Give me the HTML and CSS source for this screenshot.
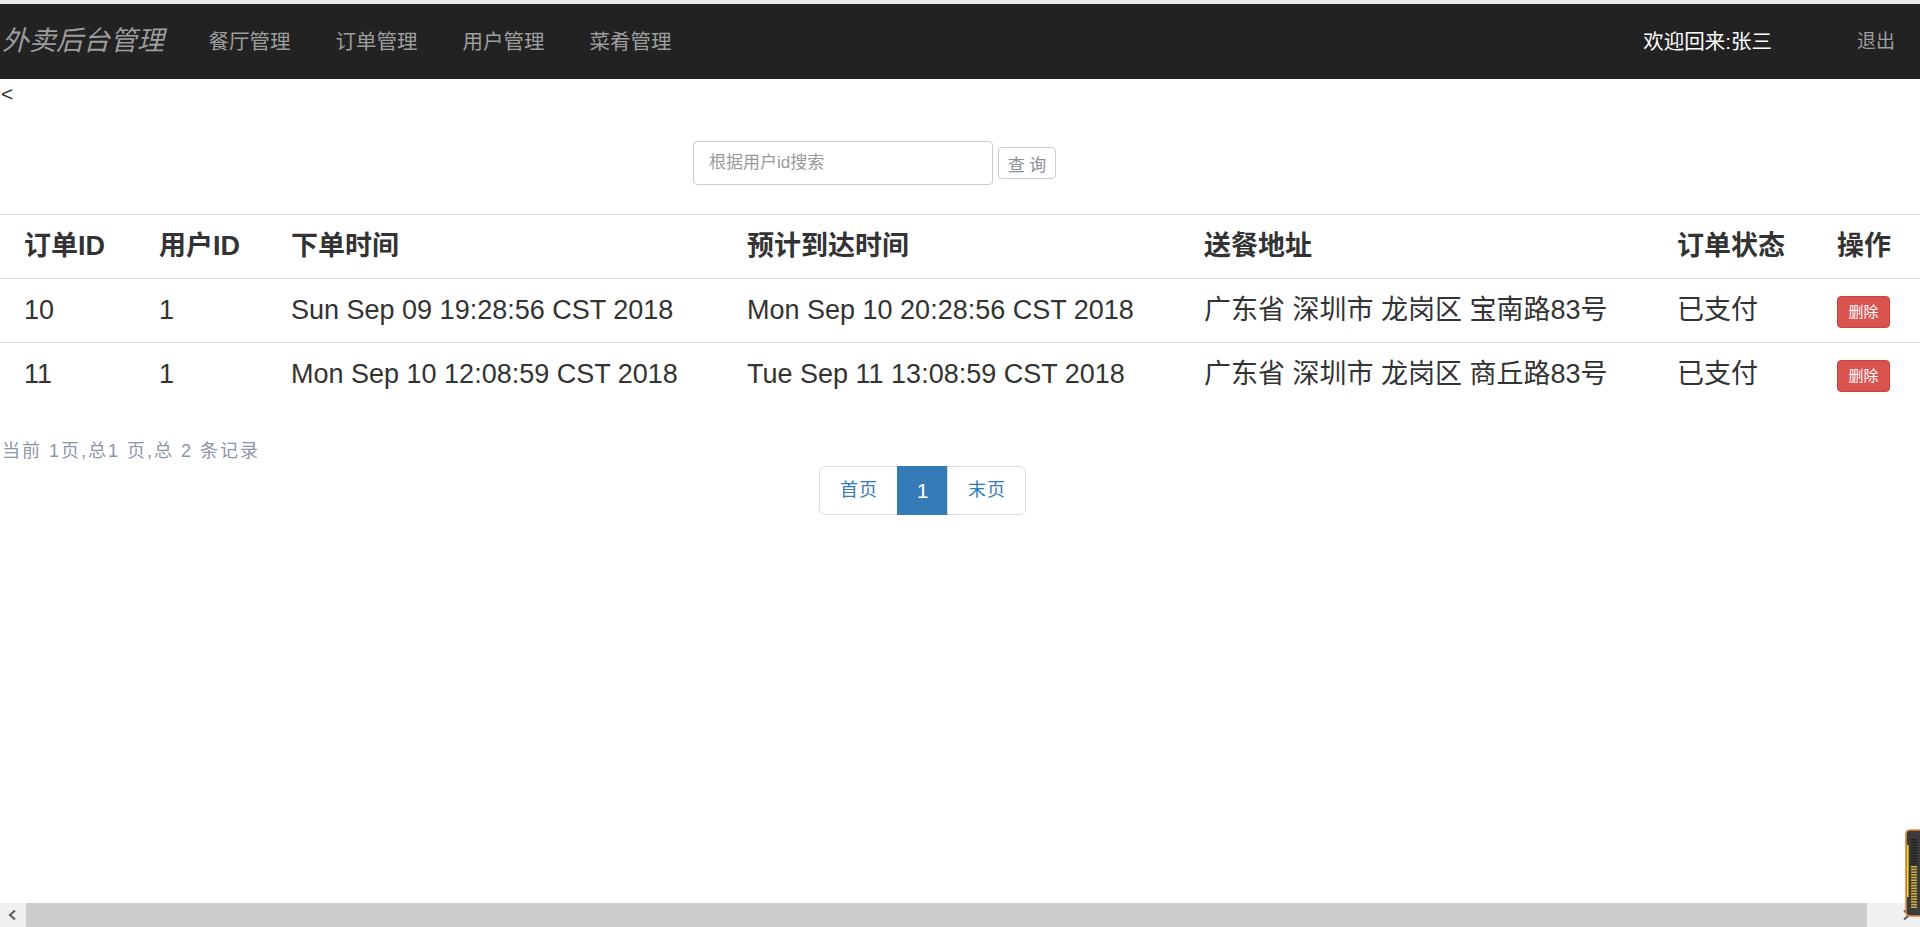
FILE: index.html
```html
<!DOCTYPE html>
<html lang="zh-CN">
<head>
<meta charset="utf-8">
<title>外卖后台管理</title>
<link rel="stylesheet" href="styles.css">
</head>
<body>
<div class="topstrip"></div>
<nav class="navbar">
  <a class="brand" href="#">外卖后台管理</a>
  <ul class="nav">
    <li><a href="#">餐厅管理</a></li>
    <li><a href="#">订单管理</a></li>
    <li><a href="#">用户管理</a></li>
    <li><a href="#">菜肴管理</a></li>
  </ul>
  <span class="welcome">欢迎回来:张三</span>
  <a class="logout" href="#">退出</a>
</nav>
<div class="back">&lt;</div>
<form class="search">
  <input class="search-input" type="text" placeholder="根据用户id搜索">
  <button class="search-btn" type="button">查 询</button>
</form>
<table class="orders">
  <colgroup>
    <col class="c1"><col class="c2"><col class="c3"><col class="c4"><col class="c5"><col class="c6"><col class="c7">
  </colgroup>
  <thead>
    <tr><th>订单ID</th><th>用户ID</th><th>下单时间</th><th>预计到达时间</th><th>送餐地址</th><th>订单状态</th><th>操作</th></tr>
  </thead>
  <tbody>
    <tr><td>10</td><td>1</td><td>Sun Sep 09 19:28:56 CST 2018</td><td>Mon Sep 10 20:28:56 CST 2018</td><td>广东省 深圳市 龙岗区 宝南路83号</td><td>已支付</td><td><button class="del" type="button">删除</button></td></tr>
    <tr><td>11</td><td>1</td><td>Mon Sep 10 12:08:59 CST 2018</td><td>Tue Sep 11 13:08:59 CST 2018</td><td>广东省 深圳市 龙岗区 商丘路83号</td><td>已支付</td><td><button class="del" type="button">删除</button></td></tr>
  </tbody>
</table>
<div class="pageinfo">当前 1页,总1 页,总 2 条记录</div>
<ul class="pagination">
  <li><a href="#">首页</a></li>
  <li class="active"><a href="#">1</a></li>
  <li><a href="#">末页</a></li>
</ul>

<div class="hscroll">
  <div class="hs-btn hs-left">
    <svg width="12" height="12" viewBox="0 0 12 12"><path d="M8 1.5 L3 6 L8 10.5" fill="none" stroke="#606060" stroke-width="2.2"/></svg>
  </div>
  <div class="hs-thumb"></div>
  <div class="hs-btn hs-right">
    <svg width="12" height="12" viewBox="0 0 12 12"><path d="M4 1.5 L9 6 L4 10.5" fill="none" stroke="#606060" stroke-width="2.2"/></svg>
  </div>
</div>
<div class="meter">
  <svg width="15" height="88" viewBox="0 0 15 88">
    <rect x="1" y="1" width="20" height="86" rx="4" fill="#3b3b3b" stroke="#e2893c" stroke-width="1.6"/>
    <rect x="2" y="16" width="1.6" height="52" fill="#f2dc1a"/>
    <g fill="#1e1e1e">
      <rect x="6" y="10" width="6" height="1.3"/><rect x="6" y="12.7" width="6" height="1.3"/><rect x="6" y="15.4" width="6" height="1.3"/><rect x="6" y="18.1" width="6" height="1.3"/><rect x="6" y="20.8" width="6" height="1.3"/><rect x="6" y="23.5" width="6" height="1.3"/><rect x="6" y="26.2" width="6" height="1.3"/><rect x="6" y="28.9" width="6" height="1.3"/><rect x="6" y="31.6" width="6" height="1.3"/><rect x="6" y="34.3" width="6" height="1.3"/>
    </g>
    <g fill="#d8b33a">
      <rect x="6" y="37" width="6" height="1.5"/><rect x="6" y="39.7" width="6" height="1.5"/><rect x="6" y="42.4" width="6" height="1.5"/><rect x="6" y="45.1" width="6" height="1.5"/><rect x="6" y="47.8" width="6" height="1.5"/><rect x="6" y="50.5" width="6" height="1.5"/><rect x="6" y="53.2" width="6" height="1.5"/><rect x="6" y="55.9" width="6" height="1.5"/><rect x="6" y="58.6" width="6" height="1.5"/><rect x="6" y="61.3" width="6" height="1.5"/><rect x="6" y="64" width="6" height="1.5"/><rect x="6" y="66.7" width="6" height="1.5"/><rect x="6" y="69.4" width="6" height="1.5"/><rect x="6" y="72.1" width="6" height="1.5"/><rect x="6" y="74.8" width="6" height="1.5"/><rect x="6" y="77.5" width="6" height="1.5"/>
    </g>
  </svg>
</div>
</body>
</html>
```

FILE: styles.css
```css
html, body {
  margin: 0;
  padding: 0;
  overflow: hidden;
  background: #fff;
}
body {
  font-family: "Liberation Sans", "Noto Sans CJK SC", sans-serif;
  color: #333;
  font-size: 21px;
  line-height: 30px;
}
a { text-decoration: none; }

.topstrip {
  height: 4px;
  background: #ececec;
}

.navbar {
  display: flex;
  align-items: center;
  height: 75px;
  background: #222;
  line-height: 75px;
}
.brand {
  font-size: 27px;
  font-style: italic;
  color: #9d9d9d;
  padding: 0 22px 0 2px;
}
.nav {
  display: flex;
  margin: 0;
  padding: 0;
  list-style: none;
}
.nav a {
  display: block;
  padding: 0 22.5px;
  font-size: 20.5px;
  color: #9d9d9d;
}
.welcome {
  margin-left: auto;
  margin-right: 85px;
  color: #fff;
  font-size: 20.5px;
}
.logout {
  color: #9d9d9d;
  font-size: 19px;
  padding-right: 25px;
}

.back {
  padding-left: 1px;
  height: 30px;
}

.search {
  display: flex;
  align-items: center;
  margin: 32px 0 0 693px;
  height: 44px;
}
.search-input {
  box-sizing: border-box;
  width: 300px;
  height: 44px;
  border: 1px solid #ccc;
  border-radius: 4px;
  padding: 0 15px;
  font-family: "Liberation Sans", "Noto Sans CJK SC", sans-serif;
  font-size: 17px;
  color: #555;
  outline: none;
}
.search-input::placeholder { color: #999; }
.search-btn {
  box-sizing: border-box;
  margin-left: 5px;
  width: 58px;
  height: 32px;
  padding: 0;
  background: #fff;
  border: 1px solid #ccc;
  border-radius: 4px;
  font-family: "Liberation Sans", "Noto Sans CJK SC", sans-serif;
  font-size: 17px;
  color: #8a8e9c;
}

.orders {
  margin-top: 29px;
  width: 100%;
  table-layout: fixed;
  border-collapse: collapse;
  font-size: 27px;
}
.c1 { width: 135px; }
.c2 { width: 132px; }
.c3 { width: 456px; }
.c4 { width: 457px; }
.c5 { width: 473px; }
.c6 { width: 160px; }
.c7 { width: 107px; }
.orders th,
.orders td {
  border-top: 1px solid #ddd;
  padding: 12px 0 12px 24px;
  height: 39px;
  line-height: 39px;
  text-align: left;
  white-space: nowrap;
  vertical-align: middle;
}
.orders th {
  font-weight: bold;
  color: #333;
}
.orders td { color: #333; }
.del {
  box-sizing: border-box;
  width: 53px;
  height: 32px;
  padding: 0;
  background: #d9534f;
  border: 1px solid #d43f3a;
  border-radius: 4px;
  color: #fff;
  font-family: "Liberation Sans", "Noto Sans CJK SC", sans-serif;
  font-size: 15px;
  line-height: 30px;
  vertical-align: middle;
}

.pageinfo {
  margin-top: 30px;
  padding-left: 2px;
  font-size: 18px;
  letter-spacing: 2px;
  color: #8d95ab;
  line-height: 30px;
}

.pagination {
  display: flex;
  margin: 0 0 0 819px;
  padding: 0;
  list-style: none;
  height: 49px;
}
.pagination li a {
  display: block;
  box-sizing: border-box;
  height: 49px;
  line-height: 47px;
  border: 1px solid #ddd;
  margin-left: -1px;
  padding: 0 19px 0 20px;
  font-size: 18px;
  letter-spacing: 1px;
  color: #337ab7;
  background: #fff;
}
.pagination li:first-child a {
  margin-left: 0;
  border-radius: 6px 0 0 6px;
}
.pagination li:last-child a {
  border-radius: 0 6px 6px 0;
}
.pagination li.active a {
  background: #337ab7;
  border-color: #337ab7;
  color: #fff;
  font-size: 21px;
  letter-spacing: 0;
  width: 51px;
  text-align: center;
  padding: 0;
}

.hscroll {
  position: fixed;
  left: 0;
  bottom: 0;
  width: 100%;
  height: 24px;
  display: flex;
  background: #f0f0f0;
}
.hs-btn {
  display: flex;
  align-items: center;
  justify-content: center;
}
.hs-left { width: 26px; }
.hs-thumb {
  width: 1841px;
  background: #cdcdcd;
}
.hs-right {
  flex: 1;
  justify-content: flex-end;
  padding-right: 8px;
}
.meter {
  position: fixed;
  right: 0;
  top: 829px;
  width: 15px;
  height: 88px;
  line-height: 0;
}
```
